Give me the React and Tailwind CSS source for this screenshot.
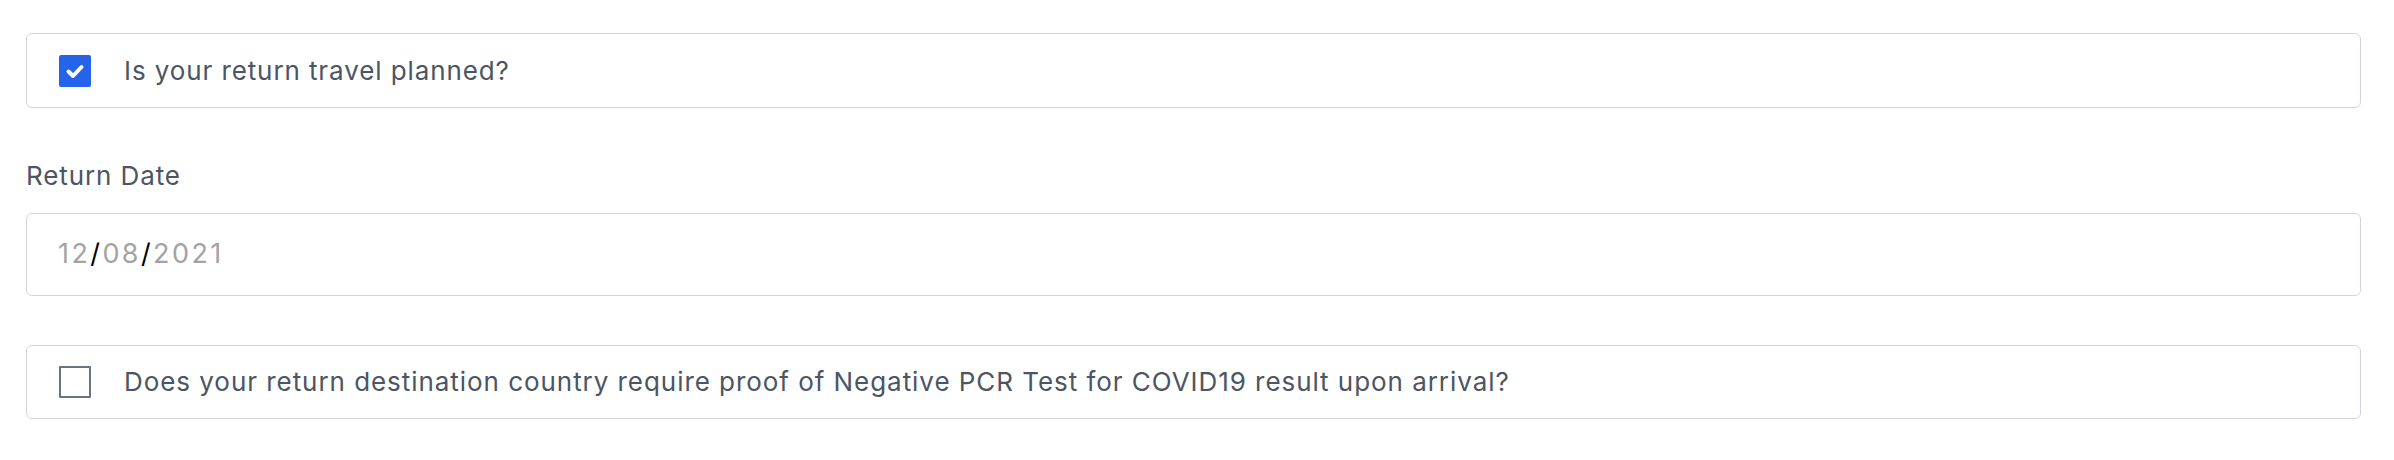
import React, { useState } from "react";

function CheckBox({ checked, onChange }) {
  return (
    <button
      type="button"
      onClick={onChange}
      className={
        checked
          ? "w-8 h-8 shrink-0 rounded-[2px] bg-[#2563eb] flex items-center justify-center"
          : "w-8 h-8 shrink-0 rounded-[1px] border-2 border-[#6b7280] bg-white"
      }
    >
      {checked && (
        <svg className="w-8 h-8" viewBox="0 0 32 32" fill="none" stroke="white" strokeWidth="4" strokeLinecap="round" strokeLinejoin="round">
          <path d="M9.5 16.5 14 21l8.5-9" />
        </svg>
      )}
    </button>
  );
}

export default function App() {
  const [planned, setPlanned] = useState(true);
  const [pcr, setPcr] = useState(false);

  return (
    <div
      className="w-full min-h-screen bg-white pl-[26px] pr-[33px] pt-[33px] text-[#4b5563]"
      style={{ fontFamily: "Inter, 'Liberation Sans', sans-serif" }}
    >
      {/* Return travel */}
      <div className="h-[75px] border border-[#d1d5db] rounded-[6px] flex items-center pl-[32px] gap-[33px]">
        <CheckBox checked={planned} onChange={() => setPlanned((p) => !p)} />
        <span className="text-[26px] tracking-[0.9px]">Is your return travel planned?</span>
      </div>

      {/* Return date */}
      <label className="block mt-[49px] mb-[18px] text-[26px] leading-[1.45] tracking-[0.9px]">Return Date</label>
      <div className="h-[83px] border border-[#d1d5db] rounded-[6px] flex items-center pl-[31px] text-[27px] tracking-[2.4px] text-[#a3a3a3]">
        <span>12</span>
        <span className="text-black">/</span>
        <span>08</span>
        <span className="text-black">/</span>
        <span>2021</span>
      </div>

      {/* PCR */}
      <div className="mt-[49px] h-[74px] border border-[#d1d5db] rounded-[6px] flex items-center pl-[32px] gap-[33px]">
        <CheckBox checked={pcr} onChange={() => setPcr((p) => !p)} />
        <span className="text-[26px] tracking-[0.95px]">
          Does your return destination country require proof of Negative PCR Test for COVID19 result upon arrival?
        </span>
      </div>
    </div>
  );
}
